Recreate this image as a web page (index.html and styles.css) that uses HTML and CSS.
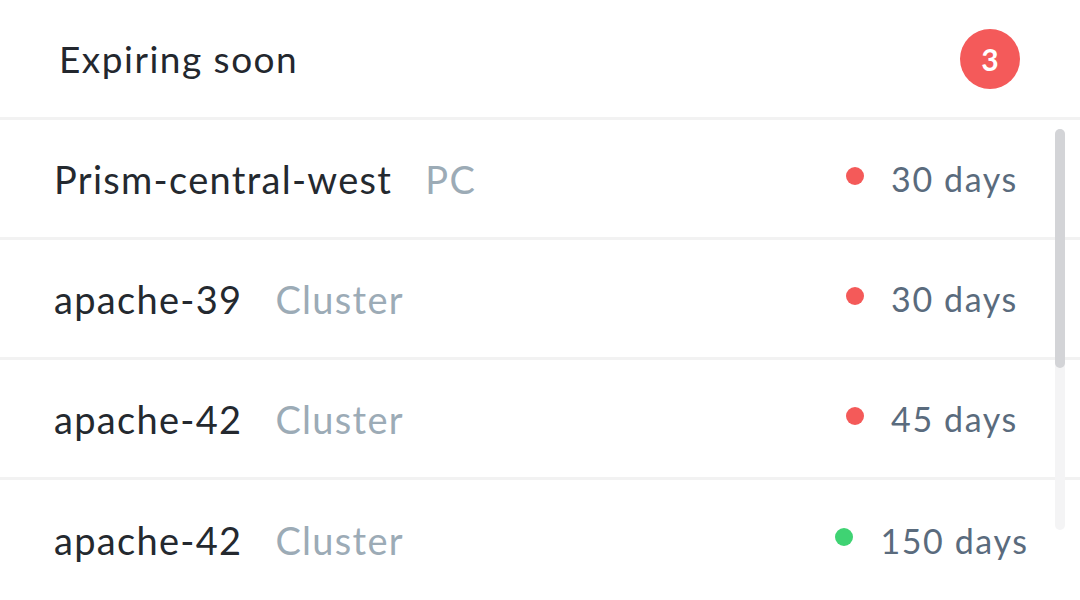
FILE: index.html
```html
<!DOCTYPE html>
<html>
<head>
<meta charset="utf-8">
<link rel="stylesheet" href="styles.css">
</head>
<body>
<div class="card">
  <div class="header">
    <div class="title">Expiring soon</div>
    <div class="badge">3</div>
  </div>
  <div class="list">
    <div class="row">
      <div class="name">Prism-central-west<span class="type">PC</span></div>
      <div class="status"><span class="dot red"></span><span class="days">30 days</span></div>
    </div>
    <div class="row">
      <div class="name">apache-39<span class="type">Cluster</span></div>
      <div class="status"><span class="dot red"></span><span class="days">30 days</span></div>
    </div>
    <div class="row">
      <div class="name">apache-42<span class="type">Cluster</span></div>
      <div class="status"><span class="dot red"></span><span class="days">45 days</span></div>
    </div>
    <div class="row last">
      <div class="name">apache-42<span class="type">Cluster</span></div>
      <div class="status"><span class="dot green"></span><span class="days">150 days</span></div>
    </div>
    <div class="scrolltrack"><div class="scrollthumb"></div></div>
  </div>
</div>
</body>
</html>
```
FILE: styles.css
```css
html, body {
  margin: 0;
  padding: 0;
  background: #ffffff;
}
body {
  width: 1080px;
  height: 600px;
  overflow: hidden;
  font-family: "Lato", "Noto Sans", sans-serif;
}
.card {
  width: 1080px;
  height: 600px;
  display: flex;
  flex-direction: column;
}
.header {
  flex: none;
  height: 120px;
  box-sizing: border-box;
  border-bottom: 3px solid #f2f2f2;
  display: flex;
  align-items: center;
  justify-content: space-between;
  padding: 0 60px 0 59px;
}
.title {
  font-size: 37px;
  color: #23272e;
  letter-spacing: 1.5px;
}
.badge {
  width: 60px;
  height: 60px;
  border-radius: 50%;
  background: #f45a5a;
  color: #ffffff;
  font-size: 30px;
  font-weight: 700;
  display: flex;
  align-items: center;
  justify-content: center;
}
.list {
  position: relative;
  flex: 1;
}
.row {
  height: 120px;
  box-sizing: border-box;
  border-bottom: 3px solid #f2f2f2;
  display: flex;
  align-items: center;
  justify-content: space-between;
  padding: 0 0 0 54px;
}
.row.last {
  border-bottom: none;
}
.name {
  font-size: 38px;
  color: #24292f;
  letter-spacing: 1.3px;
}
.type {
  color: #9cabb6;
  margin-left: 33px;
}
.status {
  width: 200px;
  display: flex;
  align-items: center;
  justify-content: center;
  margin-right: 48px;
}
.dot {
  width: 18px;
  height: 18px;
  border-radius: 50%;
  margin-right: 27px;
  margin-top: -6px;
}
.dot.red { background: #f45a59; }
.dot.green { background: #3fd373; }
.days {
  font-size: 34px;
  color: #5a6b7d;
  letter-spacing: 1.6px;
}
.scrolltrack {
  position: absolute;
  left: 1055px;
  top: 9px;
  width: 10px;
  height: 401px;
  border-radius: 5px;
  background: #f4f4f5;
}
.scrollthumb {
  height: 239px;
  border-radius: 5px;
  background: #d3d4d7;
}
```
